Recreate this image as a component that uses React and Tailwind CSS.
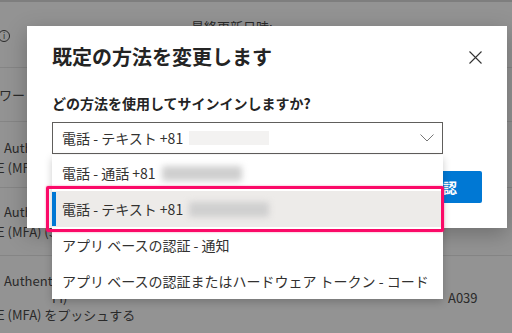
import React from 'react';

const font = { fontFamily: '"Noto Sans CJK JP", "Noto Sans", sans-serif' };

function BlurredNumber() {
  return <span className="inline-block h-[15px] w-[80px] shrink-0 rounded-[2px] bg-[#cfcfcf] blur-[3px]" />;
}

function BackgroundPage() {
  return (
    <div className="flex h-full flex-col text-[13px] leading-[20px] text-[#2a2a2a]">
      <div className="h-[2px] bg-[#7e7e7e]" />
      <div className="relative h-[66px] border-b border-[#858585]">
        <span className="absolute left-[-2px] top-[28px] flex h-[12px] w-[12px] items-center justify-center rounded-full border border-[#2a2a2a] text-[8px] leading-none">i</span>
        <span className="absolute left-[191px] top-[15px]">最終更新日時:</span>
      </div>
      <div className="flex h-[54px] items-center border-b border-[#858585]">
        <span className="ml-[-1px]">ワード</span>
      </div>
      <div className="flex h-[66px] flex-col justify-center border-b border-[#858585] pt-[6px]">
        <span className="ml-[4px]">Authenticator</span>
        <span className="ml-[-3px]">E (MFA)</span>
      </div>
      <div className="flex h-[68px] flex-col justify-center border-b border-[#858585]">
        <span className="ml-[4px]">Authenticator</span>
        <span className="ml-[-3px]">E (MFA) (SMS)</span>
      </div>
      <div className="relative flex-1">
        <span className="absolute left-[4px] top-[15px]">Authenticator</span>
        <span className="absolute left-[52px] top-[32px]">FI)</span>
        <span className="absolute left-[448px] top-[32px]">A039</span>
        <span className="absolute left-[-3px] top-[49px]">E (MFA) をプッシュする</span>
      </div>
    </div>
  );
}

export default function App() {
  const items = [
    { label: '電話 - 通話 +81', number: true },
    { label: '電話 - テキスト +81', number: true, selected: true },
    { label: 'アプリ ベースの認証 - 通知' },
    { label: 'アプリ ベースの認証またはハードウェア トークン - コード' },
  ];

  return (
    <div className="relative h-[333px] w-[512px] overflow-hidden bg-[#939393]" style={font}>
      <BackgroundPage />

      <div className="absolute left-[27px] top-[26px] flex h-[202px] w-[480px] flex-col bg-white px-[25px] pt-[16px] shadow-[0_6px_20px_rgba(0,0,0,0.25)]">
        <div className="flex items-center justify-between">
          <h2 className="text-[20px] font-semibold leading-[30px] text-[#242424]">既定の方法を変更します</h2>
          <svg width="13" height="13" viewBox="0 0 13 13">
            <path d="M0.5 0.5 L12.5 12.5 M12.5 0.5 L0.5 12.5" stroke="#333" strokeWidth="1.1" fill="none" />
          </svg>
        </div>
        <p className="mt-[21px] text-[14px] font-semibold leading-[20px] text-[#242424]">どの方法を使用してサインインしますか?</p>
        <div className="mt-[9px] flex h-[32px] w-[391px] items-center justify-between border border-[#605e5c] pl-[9px] pr-[8px] text-[14px] text-[#323130]">
          <div className="flex items-center gap-[6px]">
            <span>電話 - テキスト +81</span>
            <span className="inline-block h-[14px] w-[80px] bg-[#f3f2f1]" />
          </div>
          <svg width="14" height="8" viewBox="0 0 14 8">
            <path d="M0.5 0.5 L7 7 L13.5 0.5" stroke="#777" strokeWidth="1" fill="none" />
          </svg>
        </div>
        <div className="mt-[17px] flex justify-end">
          <button className="h-[32px] w-[78px] rounded-[2px] bg-[#0078d4] text-[14px] font-semibold text-white">確認</button>
        </div>

        <div className="absolute left-[25px] top-[129px] w-[391px] bg-white shadow-[0_3px_8px_rgba(0,0,0,0.2)]">
          {items.map((item) => (
            <div
              key={item.label}
              className={`relative flex h-[36px] items-center gap-[6px] whitespace-nowrap pl-[10px] text-[14px] text-[#323130] ${item.selected ? 'bg-[#edebe9]' : ''}`}
            >
              {item.selected && <span className="absolute left-0 top-[1px] h-[34px] w-[4px] bg-[#0078d4]" />}
              <span>{item.label}</span>
              {item.number && <BlurredNumber />}
            </div>
          ))}
          <div className="pointer-events-none absolute left-[-6px] top-[31px] h-[46px] w-[398px] rounded-[2px] border-[3px] border-[#fb0a68] shadow-[0_0_2px_rgba(251,10,104,0.5)]" />
        </div>
      </div>
    </div>
  );
}
